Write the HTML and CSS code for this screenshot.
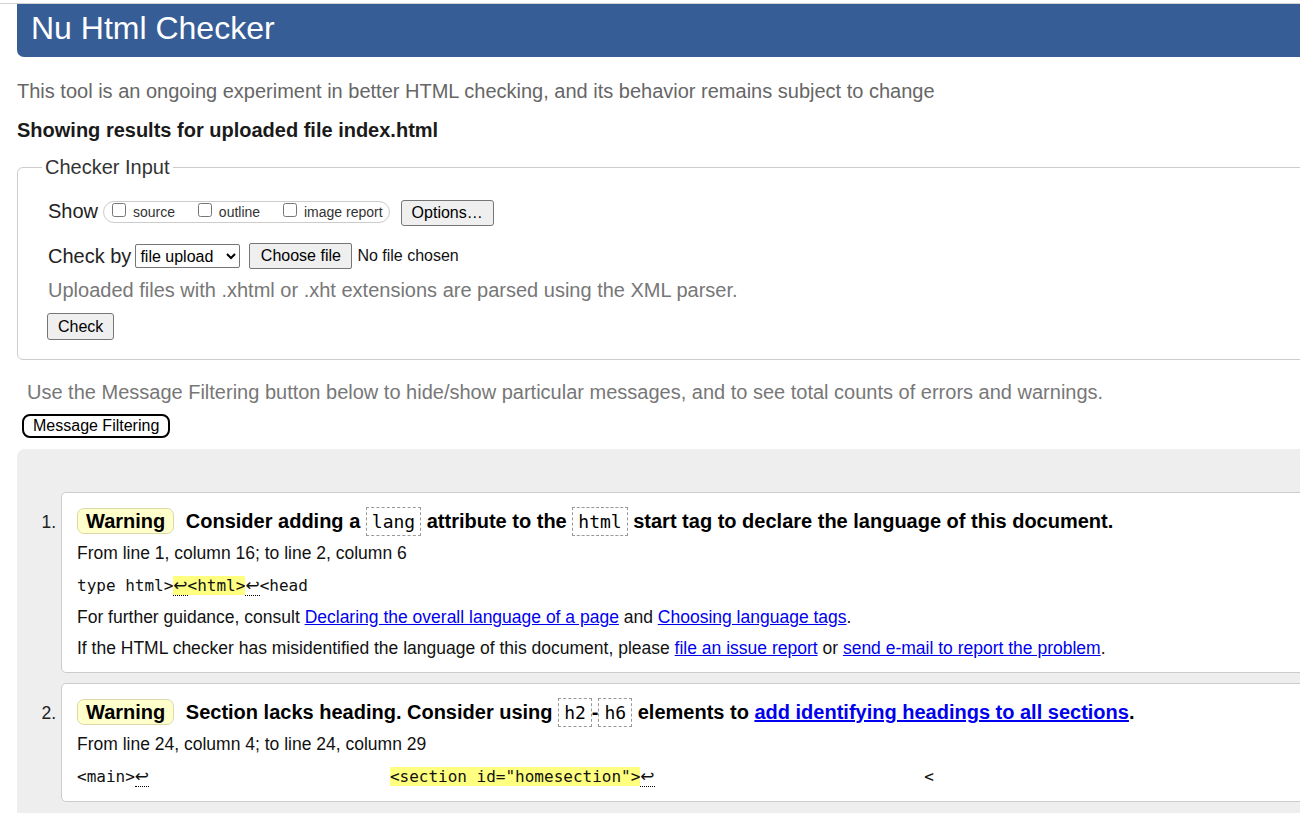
FILE: index.html
```html
<!DOCTYPE html>
<html lang="en">
<head>
<meta charset="utf-8">
<title>Nu Html Checker</title>
<link rel="stylesheet" href="styles.css">
</head>
<body>
<div class="topline"></div>
<h1 class="banner">Nu Html Checker</h1>
<p class="intro">This tool is an ongoing experiment in better HTML checking, and its behavior remains subject to change</p>
<p class="showing">Showing results for uploaded file index.html</p>
<form class="checker">
  <fieldset class="input-box">
    <legend class="legend">Checker Input</legend>
    <div class="row row-show">
      <span class="label">Show</span>
      <span class="opts">
        <label class="opt"><input type="checkbox" class="cb"> source</label>
        <label class="opt"><input type="checkbox" class="cb"> outline</label>
        <label class="opt"><input type="checkbox" class="cb"> image report</label>
      </span>
      <button type="button" class="btn btn-options">Options…</button>
    </div>
    <div class="row row-by">
      <span class="label">Check by</span>
      <select class="sel"><option>file upload</option></select>
      <button type="button" class="btn btn-file">Choose file</button>
      <span class="nofile">No file chosen</span>
    </div>
    <div class="row row-note">Uploaded files with .xhtml or .xht extensions are parsed using the XML parser.</div>
    <div class="row row-check">
      <button type="button" class="btn btn-check">Check</button>
    </div>
  </fieldset>
</form>
<p class="filter-note">Use the Message Filtering button below to hide/show particular messages, and to see total counts of errors and warnings.</p>
<button type="button" class="btn-filter">Message Filtering</button>
<div class="results">
  <ol class="messages">
    <li class="msg">
      <p class="msg-title"><strong class="warn">Warning</strong> Consider adding a <code class="tk">lang</code> attribute to the <code class="tk">html</code> start tag to declare the language of this document.</p>
      <p class="loc">From line 1, column 16; to line 2, column 6</p>
      <p class="extract"><code class="ex">type html&gt;<mark class="hl"><b class="lf">↩</b>&lt;html&gt;</mark><b class="lf">↩</b>&lt;head</code></p>
      <p class="info">For further guidance, consult <a class="lnk" href="#">Declaring the overall language of a page</a> and <a class="lnk" href="#">Choosing language tags</a>.</p>
      <p class="info">If the HTML checker has misidentified the language of this document, please <a class="lnk" href="#">file an issue report</a> or <a class="lnk" href="#">send e-mail to report the problem</a>.</p>
    </li>
    <li class="msg">
      <p class="msg-title"><strong class="warn">Warning</strong> Section lacks heading. Consider using <code class="tk">h2</code>-<code class="tk">h6</code> elements to <a class="lnk" href="#">add identifying headings to all sections</a>.</p>
      <p class="loc">From line 24, column 4; to line 24, column 29</p>
      <p class="extract"><code class="ex">&lt;main&gt;<b class="lf">↩</b>                         <mark class="hl">&lt;section id="homesection"&gt;</mark><b class="lf">↩</b>                            &lt;</code></p>
    </li>
  </ol>
</div>
</body>
</html>
```

FILE: styles.css
```css
html, body {
  margin: 0;
  padding: 0;
  overflow: hidden;
  background: #fff;
}

body {
  font-family: "Liberation Sans", Arial, sans-serif;
  font-size: 20px;
  color: #000;
}

.topline {
  height: 3px;
  border-bottom: 1px solid #d2d2d2;
}

.banner {
  margin: 0 -20px 0 17px;
  height: 53px;
  box-sizing: border-box;
  padding: 0 0 0 14px;
  background: #365d95;
  color: #fff;
  font-size: 32px;
  font-weight: normal;
  line-height: 49px;
  border-bottom-left-radius: 7px;
}

.intro {
  margin: 23px 0 0 17px;
  color: #666;
  line-height: 23px;
}

.showing {
  margin: 16px 0 0 17px;
  font-weight: bold;
  line-height: 23px;
  color: #1a1a1a;
}

.checker {
  margin: 0;
}

.input-box {
  margin: 14px -20px 0 17px;
  padding: 0 0 19px 30px;
  border: 1px solid #ccc;
  border-radius: 6px;
  min-width: 0;
}

.legend {
  padding: 0 3px;
  margin-left: -6px;
  line-height: 23px;
  color: #333;
}

.row {
  display: flex;
  align-items: center;
}

.label {
  color: #222;
  line-height: 23px;
}

.row-show {
  margin-top: 21px;
  height: 26px;
  align-items: flex-start;
}

.opts {
  display: flex;
  align-items: center;
  height: 22px;
  box-sizing: border-box;
  margin: 1px 0 0 5px;
  padding: 0 6px 0 4px;
  border: 1px solid #ccc;
  border-radius: 11px;
  gap: 19px;
}

.opt {
  font-size: 14px;
  line-height: 20px;
  color: #333;
}

.cb {
  width: 14px;
  height: 14px;
  margin: 0 3px 0 4px;
  vertical-align: baseline;
}

.btn {
  font-family: "Liberation Sans", Arial, sans-serif;
  font-size: 16px;
  color: #000;
  background: #efefef;
  border: 1px solid #767676;
  border-radius: 3px;
  padding: 0 10px;
  height: 26px;
  box-sizing: border-box;
}

.btn-options {
  margin-left: 11px;
}

.row-by {
  margin-top: 17px;
  height: 26px;
}

.sel {
  margin-left: 4px;
  width: 105px;
  height: 24px;
  box-sizing: border-box;
  font-family: "Liberation Sans", Arial, sans-serif;
  font-size: 16px;
  color: #000;
  background: #fff;
  border: 1px solid #767676;
  border-radius: 2px;
  padding: 0;
}

.btn-file {
  margin-left: 9px;
  width: 103px;
  border-radius: 2px;
}

.nofile {
  margin-left: 5px;
  font-size: 16px;
  color: #111;
}

.row-note {
  margin-top: 10px;
  line-height: 23px;
  color: #777;
}

.row-check {
  margin-top: 11px;
  margin-left: -1px;
}

.btn-check {
  height: 27px;
}

.filter-note {
  margin: 21px 0 0 27px;
  line-height: 23px;
  color: #777;
}

.btn-filter {
  display: block;
  margin: 10px 0 0 22px;
  height: 24px;
  box-sizing: border-box;
  padding: 0 9px;
  font-family: "Liberation Sans", Arial, sans-serif;
  font-size: 16px;
  color: #000;
  background: #fff;
  border: 2px solid #000;
  border-radius: 8px;
}

.results {
  margin: 11px -20px 0 17px;
  background: #eee;
  border-top-left-radius: 8px;
  padding-bottom: 40px;
}

.messages {
  margin: 0;
  padding: 43px 0 0 44px;
  list-style: decimal;
}

.msg {
  background: #fff;
  border: 1px solid #ccc;
  border-radius: 5px;
  padding: 12px 0 8px 15px;
  margin-bottom: 10px;
  font-size: 17.5px;
  line-height: 31px;
  color: #111;
}

.msg::marker {
  color: #222;
}

.msg-title {
  margin: 0;
  font-size: 20px;
  font-weight: bold;
  line-height: 32px;
  color: #000;
}

.warn {
  display: inline-block;
  background: #ffffcc;
  border: 1px solid #dcd9a8;
  border-radius: 7px;
  padding: 0 8px;
  line-height: 24px;
  margin-right: 6px;
}

.tk {
  font-family: "DejaVu Sans Mono", "Liberation Mono", monospace;
  font-size: 18px;
  font-weight: normal;
  border: 1px dashed #999;
  padding: 3px 5px;
}

.loc, .info {
  margin: 0;
}

.extract {
  margin: 0;
  line-height: 32px;
}

.ex {
  font-family: "DejaVu Sans Mono", "Liberation Mono", monospace;
  font-size: 16px;
  white-space: pre;
  color: #111;
}

.hl {
  background: #ffff80;
  color: inherit;
}

.lf {
  font-family: "DejaVu Sans", sans-serif;
  font-size: 17px;
  font-weight: normal;
  border-bottom: 1px dotted #000;
}

.lnk {
  color: #0000ee;
  text-decoration: underline;
}
```
